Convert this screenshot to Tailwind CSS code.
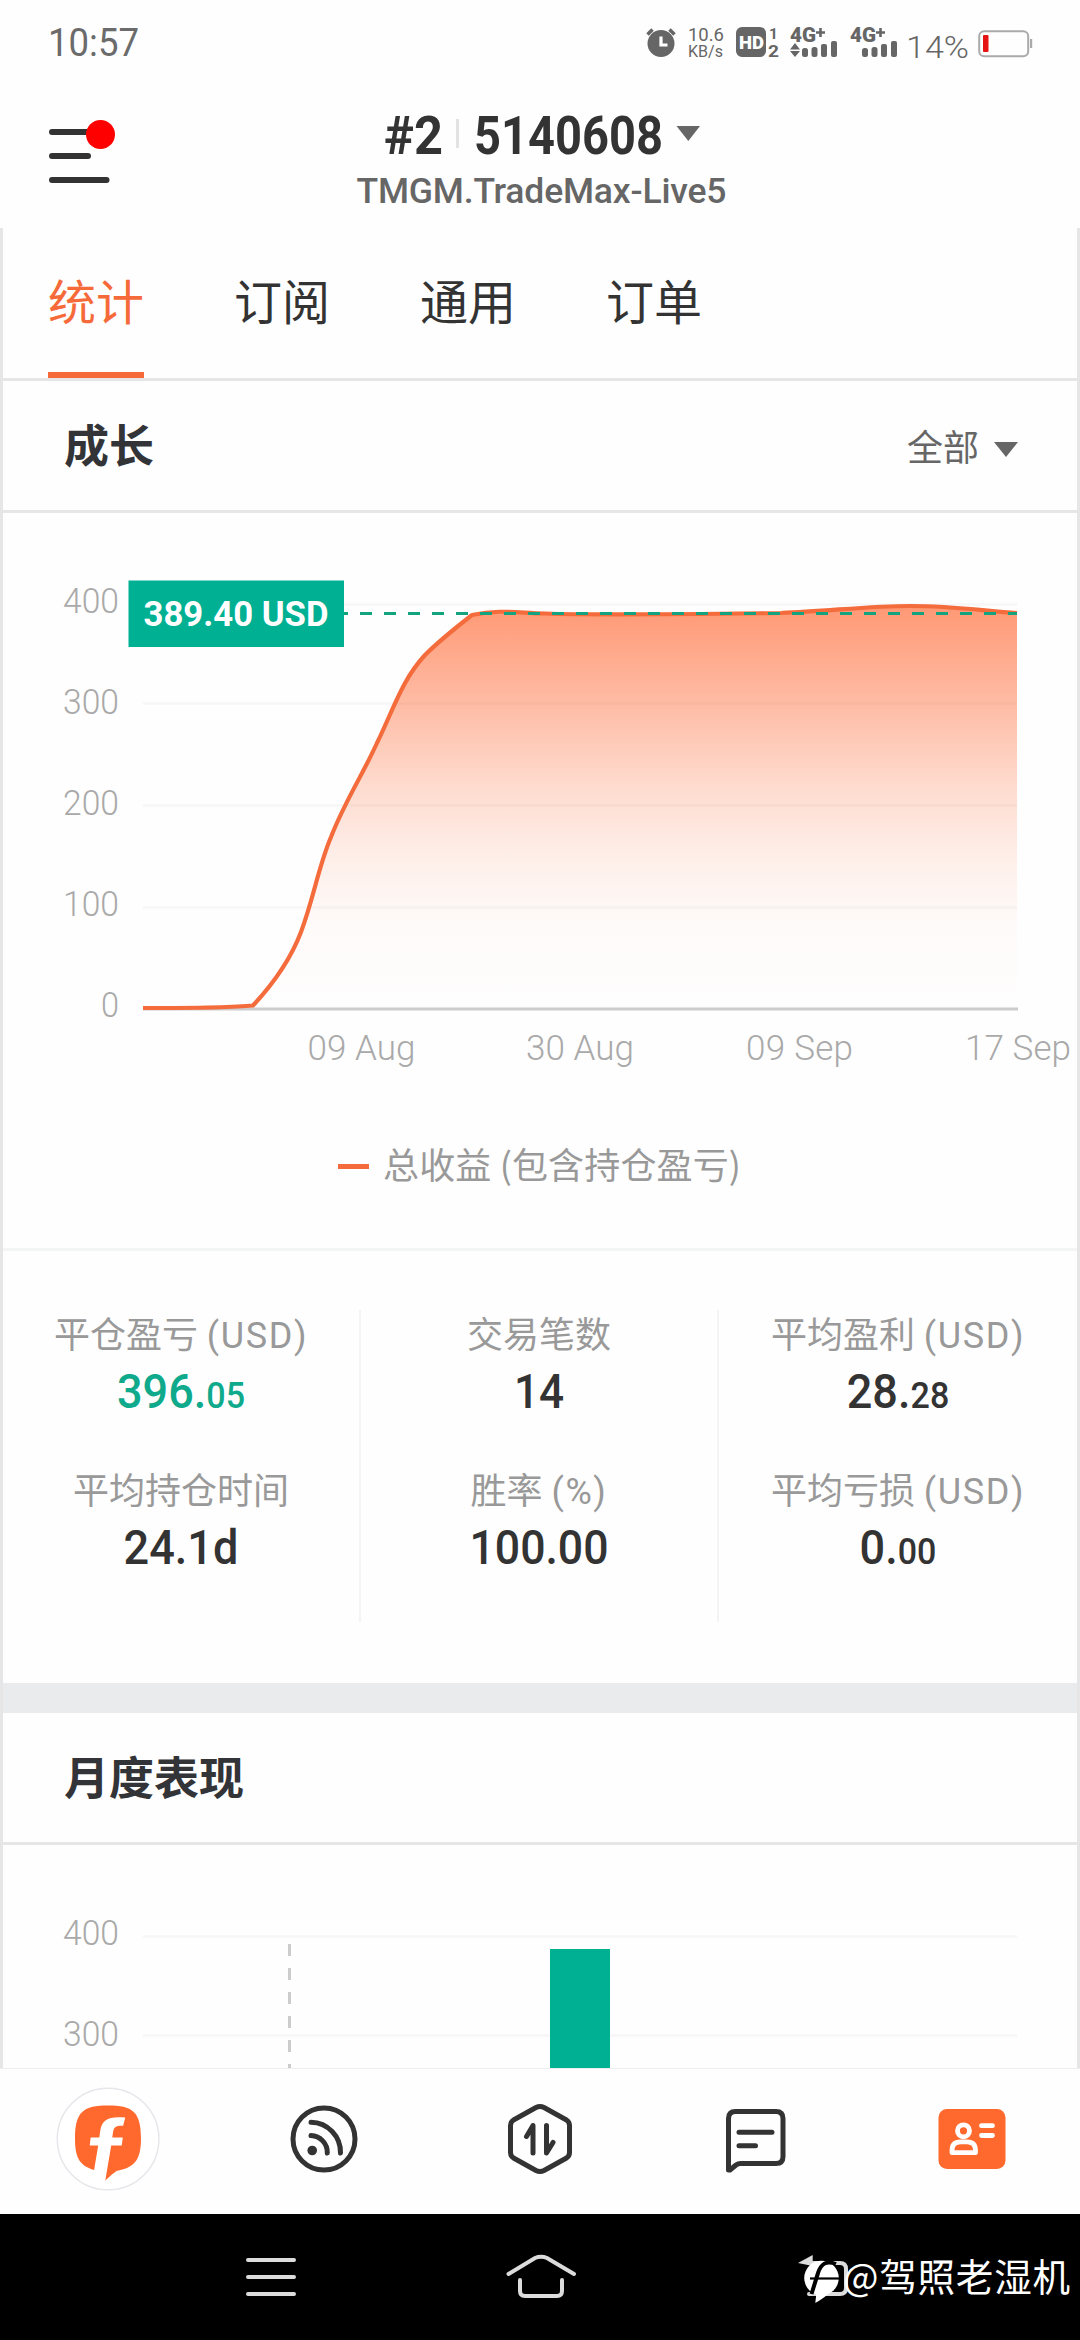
<!DOCTYPE html>
<html lang="zh-CN">
<head>
<meta charset="utf-8">
<title>账户统计</title>
<script src="https://cdn.jsdelivr.net/npm/@tailwindcss/browser@4"></script>
</head>
<body class="w-[1080px] h-[2340px] overflow-hidden bg-[#fefefe] flex flex-col text-[#333] font-['Roboto','Noto_Sans_CJK_SC',sans-serif]">

<!-- system status bar -->
<div class="h-[84px] shrink-0 flex items-center justify-between pl-12 pr-[46px] text-[#666]">
  <svg class="w-[100px] h-[84px]" viewBox="48 0 100 84" fill="#6b6b6b"><text x="48" y="55.5" font-size="38" textLength="91" lengthAdjust="spacingAndGlyphs">10:57</text></svg>
  <svg class="w-[392px] h-[84px]" viewBox="642 0 392 84" fill="#666">
    <circle cx="661" cy="43.5" r="13.5"/>
    <path d="M647.500 34.500l5-5M674.500 34.500l-5-5" stroke="#666" stroke-width="3.500"/>
    <path d="M661 36.500v8.500h6.500" stroke="#fff" stroke-width="3.200" fill="none"/>
    <text x="688" y="40.500" font-size="18" textLength="36" lengthAdjust="spacingAndGlyphs">10.6</text>
    <text x="688" y="57" font-size="16.500" textLength="35" lengthAdjust="spacingAndGlyphs">KB/s</text>
    <rect x="736" y="27" width="30" height="30" rx="6"/>
    <text x="739" y="48.500" font-size="18" font-weight="900" fill="#fff" textLength="25" lengthAdjust="spacingAndGlyphs">HD</text>
    <text x="769" y="38.500" font-size="15.500" font-weight="700">1</text>
    <text x="768" y="56.500" font-size="17" font-weight="700" textLength="11" lengthAdjust="spacingAndGlyphs">2</text>
    <text x="790" y="42" font-size="20" font-weight="900" textLength="26" lengthAdjust="spacingAndGlyphs">4G</text>
    <path d="M820.500 28v9M816 32.500h9" stroke="#666" stroke-width="2.600"/>
    <path d="M795 43l5 6.500h-10zM795 57l5-6h-10z"/>
    <rect x="802" y="48" width="6" height="9" rx="2.500"/><rect x="811.500" y="47" width="6" height="10" rx="2.500"/><rect x="821" y="44" width="6" height="13" rx="2"/><rect x="831" y="41" width="6" height="16" rx="2"/>
    <text x="850" y="42" font-size="20" font-weight="900" textLength="26" lengthAdjust="spacingAndGlyphs">4G</text>
    <path d="M880.500 28v9M876 32.500h9" stroke="#666" stroke-width="2.600"/>
    <rect x="862" y="48" width="6" height="9" rx="2.500"/><rect x="871.500" y="47" width="6" height="10" rx="2.500"/><rect x="881" y="44" width="6" height="13" rx="2"/><rect x="891" y="41" width="6" height="16" rx="2"/>
    <text x="906" y="57.500" font-size="31.500" font-weight="300" textLength="63" lengthAdjust="spacingAndGlyphs">14%</text>
    <rect x="979.200" y="31.200" width="49" height="25" rx="5" fill="none" stroke="#aaa" stroke-width="2"/>
    <rect x="1030" y="39" width="2.200" height="9" fill="#aaa"/>
    <rect x="983" y="35" width="5.500" height="17" rx="1" fill="#e51313"/>
  </svg>
</div>

<!-- account header -->
<header class="h-36 shrink-0 flex items-start pl-12 pr-12">
  <svg class="w-[70px] h-[80px] mt-8" viewBox="48 116 70 80"><path d="M52 132h40M52 156h36M52 180h54.500" stroke="#333" stroke-width="6" stroke-linecap="round"/><circle cx="100.500" cy="134.500" r="14.500" fill="#f00"/></svg>
  <svg class="w-[420px] h-[144px] ml-[212px]" viewBox="330 84 420 144">
    <g fill="#333" font-size="53" font-weight="700">
      <text x="384" y="154" textLength="59" lengthAdjust="spacingAndGlyphs">#2</text>
      <text x="474" y="154" textLength="189" lengthAdjust="spacingAndGlyphs">5140608</text>
    </g>
    <path d="M457.500 119v29" stroke="#e3e3e3" stroke-width="3"/>
    <path d="M676.500 126h23.500l-11.700 15z" fill="#666"/>
    <text x="356.500" y="203" font-size="35.500" font-weight="500" fill="#666" textLength="370" lengthAdjust="spacing">TMGM.TradeMax-Live5</text>
  </svg>
</header>

<!-- scrolling content -->
<main class="h-[1840px] shrink-0 overflow-hidden border-x-[3px] border-[#e6e6e6] flex flex-col">
  <nav class="h-[153px] shrink-0 border-b-[3px] border-[#e6e6e6] pl-[45px] flex gap-[90px] text-[48px] leading-[152px]">
    <div class="h-[150px] border-b-[6px] border-[#f66a3a] text-[#f66a3a]">统计</div>
    <div>订阅</div><div>通用</div><div>订单</div>
  </nav>

  <section class="shrink-0">
    <div class="h-[132px] border-b-[3px] border-[#e6e6e6] pl-[61px] pr-[59px] flex items-center justify-between">
      <h2 class="text-[45px] font-bold leading-none text-[#333437] pt-[3px]">成长</h2>
      <div class="flex items-center gap-[15px] text-[36px] leading-none text-[#666] pt-[7px]"><span>全部</span><svg class="w-6 h-[15px]" viewBox="0 0 24 15"><path d="M0 0h24L12 15z" fill="#666"/></svg></div>
    </div>
    <svg class="w-[1074px] h-[590px] block overflow-visible" viewBox="3 513 1074 590">
      <defs>
        <linearGradient id="area" gradientUnits="userSpaceOnUse" x1="0" y1="606" x2="0" y2="1008">
          <stop offset="0" stop-color="#ff6d3a" stop-opacity=".7"/><stop offset=".26" stop-color="#ff6d3a" stop-opacity=".44"/><stop offset=".45" stop-color="#ff6d3a" stop-opacity=".24"/><stop offset=".62" stop-color="#ff6d3a" stop-opacity=".11"/><stop offset=".78" stop-color="#ff6d3a" stop-opacity=".03"/><stop offset="1" stop-color="#ff6d3a" stop-opacity="0"/>
        </linearGradient>
      </defs>
      <path d="M143 604.500h874M143 703.500h874M143 805.500h874M143 907.500h874" stroke="#f6f6f6" stroke-width="2.500"/>
      <path d="M143 1009h875" stroke="#ccc" stroke-width="3"/>
      <path d="M143 1008C180 1008 230 1008 253 1005.500Q287 969 301 932C314 897 318 868 331 837C345 801 361 778 377 743C394 708 402 680 425 655Q440 640 472 615C500 609 518 613 545 613.500C600 615.500 700 614 781 613C830 611 870 606 910 606C955 606 985 611 1017 613V1009H143z" fill="url(#area)"/>
      <path d="M143 1008C180 1008 230 1008 253 1005.500Q287 969 301 932C314 897 318 868 331 837C345 801 361 778 377 743C394 708 402 680 425 655Q440 640 472 615C500 609 518 613 545 613.500C600 615.500 700 614 781 613C830 611 870 606 910 606C955 606 985 611 1017 613" fill="none" stroke="#f46b3c" stroke-width="4.200" stroke-linejoin="round"/>
      <path d="M336 613.500H1017" stroke="#13a37f" stroke-width="3" stroke-dasharray="12 12"/>
      <rect x="128.500" y="580.500" width="215.500" height="66.500" fill="#00b093"/>
      <text x="143.500" y="625.500" font-size="35" font-weight="700" fill="#fff" textLength="185" lengthAdjust="spacingAndGlyphs">389.40 USD</text>
      <g font-size="35" font-weight="300" fill="#a9a9a9">
        <text x="63" y="612.500" textLength="56" lengthAdjust="spacingAndGlyphs">400</text>
        <text x="63" y="713.500" textLength="56" lengthAdjust="spacingAndGlyphs">300</text>
        <text x="63" y="814.500" textLength="56" lengthAdjust="spacingAndGlyphs">200</text>
        <text x="63" y="915.500" textLength="56" lengthAdjust="spacingAndGlyphs">100</text>
        <text x="101" y="1017" textLength="18" lengthAdjust="spacingAndGlyphs">0</text>
        <text x="307.500" y="1059.500" textLength="108">09 Aug</text>
        <text x="526" y="1059.500" textLength="108">30 Aug</text>
        <text x="746" y="1059.500" textLength="107">09 Sep</text>
        <text x="965" y="1059.500" textLength="106">17 Sep</text>
      </g>
    </svg>
    <div class="h-[148px] border-b-[3px] border-[#f3f4f4] pt-[39px] flex items-start justify-center">
      <div class="flex items-center gap-[14px] text-[#999] font-['Noto_Sans_CJK_SC']"><i class="w-[31px] h-[5px] bg-[#f46b3c]"></i><svg class="w-[364px] h-[48px] -mr-1" viewBox="0 -2 364 48" fill="#999"><text x="0" y="34.500" font-size="36" textLength="358">总收益 (包含持仓盈亏)</text></svg></div>
    </div>
  </section>

  <!-- key figures -->
  <section class="shrink-0 h-[432px] pt-[59px]">
    <div class="grid grid-cols-3 h-[312px] text-center divide-x-2 divide-[#f3f4f4]">
      <div>
        <div class="h-[156px]"><div class="text-[36px] leading-[52px] text-[#999]">平仓盈亏 <span class="tracking-[1.6px]">(USD)</span></div><div class="text-[49px] leading-[60px] font-medium text-[#0fa98c] scale-x-[.92]">396.<span class="text-[37px]">05</span></div></div>
        <div class="h-[156px]"><div class="text-[36px] leading-[52px] text-[#999]">平均持仓时间</div><div class="text-[49px] leading-[60px] font-medium scale-x-[.92]">24.1d</div></div>
      </div>
      <div>
        <div class="h-[156px]"><div class="text-[36px] leading-[52px] text-[#999]">交易笔数</div><div class="text-[49px] leading-[60px] font-medium scale-x-[.9]">14</div></div>
        <div class="h-[156px]"><div class="text-[36px] leading-[52px] text-[#999]">胜率 <span class="tracking-[1.6px]">(%)</span></div><div class="text-[49px] leading-[60px] font-medium scale-x-[.91]">100.00</div></div>
      </div>
      <div>
        <div class="h-[156px]"><div class="text-[36px] leading-[52px] text-[#999]">平均盈利 <span class="tracking-[1.6px]">(USD)</span></div><div class="text-[49px] leading-[60px] font-medium scale-x-[.92]">28.<span class="text-[37px]">28</span></div></div>
        <div class="h-[156px]"><div class="text-[36px] leading-[52px] text-[#999]">平均亏损 <span class="tracking-[1.6px]">(USD)</span></div><div class="text-[49px] leading-[60px] font-medium scale-x-[.92]">0.<span class="text-[37px]">00</span></div></div>
      </div>
    </div>
  </section>
  <div class="h-[30px] shrink-0 bg-[#eaebed]"></div>

  <!-- monthly performance -->
  <section class="shrink-0">
    <div class="h-[132px] border-b-[3px] border-[#e6e6e6] pl-[61px] flex items-center"><h2 class="text-[45px] font-bold leading-none text-[#333437] pt-[3px]">月度表现</h2></div>
    <svg class="w-[1074px] h-[223px] block" viewBox="3 1845 1074 223">
      <path d="M143 1936.500h874M143 2035.500h874" stroke="#f6f6f6" stroke-width="2.500"/>
      <path d="M289.500 1944v124" stroke="#ccc" stroke-width="3" stroke-dasharray="12 12"/>
      <rect x="550" y="1949" width="60" height="119" fill="#00b093"/>
      <g font-size="35" font-weight="300" fill="#a9a9a9">
        <text x="63" y="1944.500" textLength="56" lengthAdjust="spacingAndGlyphs">400</text>
        <text x="63" y="2045.500" textLength="56" lengthAdjust="spacingAndGlyphs">300</text>
      </g>
    </svg>
  </section>
</main>

<!-- app tab bar -->
<nav class="h-[146px] shrink-0 border-t border-[#eee] pb-[5px] grid grid-cols-5 items-center justify-items-center">
  <svg class="w-[104px] h-[104px]" viewBox="55.500 2087.500 104 104">
    <circle cx="107.600" cy="2139.500" r="50.800" fill="#fff" stroke="#e6e7ea" stroke-width="1.500"/>
    <path d="M107.500 2106C132 2106 140.500 2112 140.500 2139C140.500 2162 133 2168 116 2171.500Q111 2175 104.700 2181L93.700 2170.500C80 2166 74.500 2160 74.500 2139C74.500 2112 83 2106 107.500 2106z" fill="#ff692d"/>
    <path d="M124.800 2118L122.600 2126.300H119Q113.500 2126.500 112.600 2132L111.800 2138H122.300L121.200 2146H110.700L104.900 2180.500Q98 2183 93.500 2171L97.700 2146H89.200L90.200 2138H98.800L99.800 2131C101.500 2120 108 2116.500 124.800 2118z" fill="#fff"/>
  </svg>
  <svg class="w-[70px] h-[70px]" viewBox="288.500 2104.500 70 70" fill="none" stroke="#333" stroke-width="5" stroke-linecap="round">
    <circle cx="323.500" cy="2139.500" r="31"/><circle cx="311.700" cy="2151" r="4.800" fill="#333" stroke="none"/>
    <path d="M310.500 2122.700A30 30 0 0 1 340 2153.500M310.500 2136A17 17 0 0 1 326.800 2153.500"/>
  </svg>
  <svg class="w-[72px] h-[74px]" viewBox="504 2102.500 72 74" fill="none" stroke="#333" stroke-width="5" stroke-linecap="round" stroke-linejoin="round">
    <path d="M536 2108L513.500 2120.500Q510.500 2122.500 510.500 2126V2153Q510.500 2156.500 513.500 2158.500L536 2171Q540 2173 544 2171L566.500 2158.500Q569.500 2156.500 569.500 2153V2126Q569.500 2122.500 566.500 2120.500L544 2108Q540 2106 536 2108z"/>
    <path d="M526.500 2137L533 2126V2153.500M546.500 2126V2153.500L553 2143"/>
  </svg>
  <svg class="w-[64px] h-[70px]" viewBox="724 2104.500 64 70" fill="none" stroke="#333" stroke-width="5" stroke-linecap="round" stroke-linejoin="round">
    <path d="M728.500 2170.500V2119Q728.500 2112 735.500 2112H776Q783 2112 783 2119V2157Q783 2164 776 2164H740.500Q738 2164 736 2165.500L730 2170.500zM739 2132.700H772M739 2146.300H755.500"/>
  </svg>
  <svg class="w-[68px] h-[62px]" viewBox="937.500 2108.500 68 62">
    <rect x="938" y="2109.500" width="67" height="60" rx="8.500" fill="#ff692d"/>
    <g fill="none" stroke="#fff" stroke-width="4.800"><circle cx="963" cy="2131.300" r="6"/><path d="M951.500 2153.200V2151Q951.500 2142.300 960 2142.300H966.500Q975 2142.300 975 2151V2153.200z" stroke-linejoin="round"/><path d="M981 2126.200H992M981 2136H992" stroke-linecap="round"/></g>
  </svg>
</nav>

<!-- system navigation -->
<footer class="h-[126px] shrink-0 bg-black">
  <svg class="w-[1080px] h-[126px] block" viewBox="0 2214 1080 126" fill="none" stroke="#dcdcdc" stroke-width="4" stroke-linecap="round">
    <path d="M248 2260H294M248 2277H294M248 2294H294"/>
    <path d="M508.500 2274L535 2258Q541 2255.500 547 2258L574 2274M520 2280V2291Q520 2296 525 2296H557Q562 2296 562 2291V2280"/>
    <path d="M798 2263L812.700 2255V2266z" fill="#dcdcdc" stroke="none"/>
    <path d="M811 2263H840Q846 2263 846 2269V2288Q846 2294 840 2294H809"/>
    <g stroke="none"><circle cx="821.500" cy="2278" r="17.300" fill="#fff"/><path d="M817 2288L815.300 2303Q826 2297 831 2291z" fill="#fff"/></g>
    <path d="M836 2264C826 2260 821 2264 818 2273L811.500 2294" stroke="#000" stroke-width="4" stroke-linecap="butt"/><path d="M810 2278.500H839" stroke="#000" stroke-width="2.200" stroke-linecap="butt"/>
    <text x="843" y="2291" font-size="37.600" fill="#fff" stroke="none" textLength="227" font-family="Noto Sans CJK SC">@驾照老湿机</text>
  </svg>
</footer>
</body>
</html>
